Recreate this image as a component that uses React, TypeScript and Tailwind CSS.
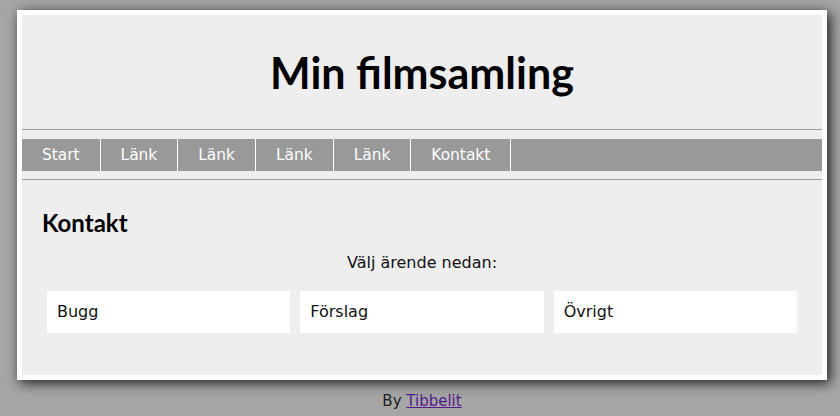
import React from "react";

const dv = { fontFamily: '"DejaVu Sans", sans-serif' };
const lato = { fontFamily: 'Lato, "DejaVu Sans", sans-serif' };

export default function App() {
  const nav = ["Start", "Länk", "Länk", "Länk", "Länk", "Kontakt"];
  const boxes = ["Bugg", "Förslag", "Övrigt"];
  return (
    <div className="w-full h-[416px] bg-[#a6a6a6] pt-[10px] overflow-hidden" style={dv}>
      <div className="ml-[17px] w-[810px] border-[5px] border-white bg-[#eeeeee] shadow-[3px_3px_12px_#1a1a1a]">
        <div className="h-[114px] flex items-center justify-center">
          <h1 className="text-[43px] leading-none font-bold text-black" style={lato}>
            Min filmsamling
          </h1>
        </div>
        <div className="h-px bg-[#999999]" />
        <div className="h-[9px]" />
        <nav className="h-[32px] bg-[#999999] flex">
          {nav.map((n, i) => (
            <div
              key={i}
              className="px-[20px] border-r border-white text-white text-[15.4px] leading-[32px]"
            >
              {n}
            </div>
          ))}
        </nav>
        <div className="h-[8px]" />
        <div className="h-px bg-[#999999]" />
        <div className="px-[20px] pt-[28px] pb-[42px]">
          <h2 className="text-[24px] leading-[29px] font-bold text-black" style={lato}>
            Kontakt
          </h2>
          <p className="mt-[14px] text-center text-[16px] leading-[24px] text-[#111]">
            Välj ärende nedan:
          </p>
          <div className="mt-[16px] px-[5px] flex gap-[10px]">
            {boxes.map((b) => (
              <div
                key={b}
                className="flex-1 h-[42px] bg-white px-[10px] flex items-center text-[16px] leading-[24px] text-[#111]"
              >
                {b}
              </div>
            ))}
          </div>
        </div>
      </div>
      <div className="ml-[17px] w-[810px] mt-[9px] text-center text-[15px] leading-[24px] text-[#222]">
        By{" "}
        <a href="#" className="underline text-[#551a8b]">
          Tibbelit
        </a>
      </div>
    </div>
  );
}
